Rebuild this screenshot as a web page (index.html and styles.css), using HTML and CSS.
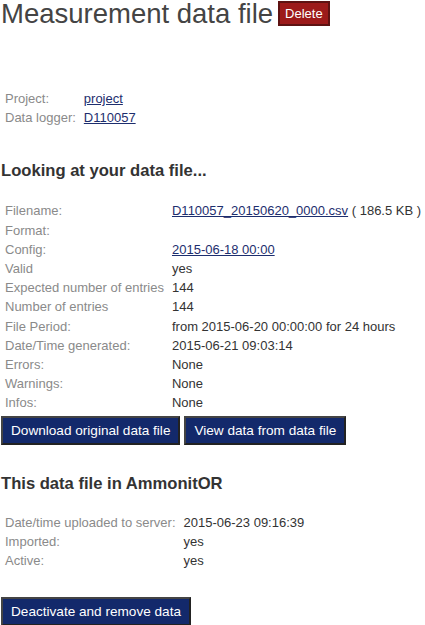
FILE: index.html
```html
<!DOCTYPE html>
<html>
<head>
<meta charset="utf-8">
<link rel="stylesheet" href="styles.css">
</head>
<body>
<h1 class="title">Measurement data file <button class="btn btn-danger">Delete</button></h1>

<table class="info info-top">
  <tr><td class="label">Project:</td><td class="value"><a href="#">project</a></td></tr>
  <tr><td class="label">Data logger:</td><td class="value"><a href="#">D110057</a></td></tr>
</table>

<h2 class="section">Looking at your data file...</h2>

<table class="info">
  <tr><td class="label">Filename:</td><td class="value"><a href="#">D110057_20150620_0000.csv</a> ( 186.5 KB )</td></tr>
  <tr><td class="label">Format:</td><td class="value"></td></tr>
  <tr><td class="label">Config:</td><td class="value"><a href="#">2015-06-18 00:00</a></td></tr>
  <tr><td class="label">Valid</td><td class="value">yes</td></tr>
  <tr><td class="label">Expected number of entries</td><td class="value">144</td></tr>
  <tr><td class="label">Number of entries</td><td class="value">144</td></tr>
  <tr><td class="label">File Period:</td><td class="value">from 2015-06-20 00:00:00 for 24 hours</td></tr>
  <tr><td class="label">Date/Time generated:</td><td class="value">2015-06-21 09:03:14</td></tr>
  <tr><td class="label">Errors:</td><td class="value">None</td></tr>
  <tr><td class="label">Warnings:</td><td class="value">None</td></tr>
  <tr><td class="label">Infos:</td><td class="value">None</td></tr>
</table>

<div class="actions">
  <button class="btn btn-primary">Download original data file</button>
  <button class="btn btn-primary">View data from data file</button>
</div>

<h2 class="section section-2">This data file in AmmonitOR</h2>

<table class="info info-bottom">
  <tr><td class="label">Date/time uploaded to server:</td><td class="value">2015-06-23 09:16:39</td></tr>
  <tr><td class="label">Imported:</td><td class="value">yes</td></tr>
  <tr><td class="label">Active:</td><td class="value">yes</td></tr>
</table>

<div class="actions actions-bottom">
  <button class="btn btn-primary">Deactivate and remove data</button>
</div>
</body>
</html>
```

FILE: styles.css
```css
html, body {
  margin: 0;
  padding: 0;
  background: #fff;
}
body {
  padding: 0 1px;
  font-family: "Liberation Sans", Arial, sans-serif;
  font-size: 13px;
  color: #333;
}
.title {
  margin: 0;
  font-size: 27.5px;
  font-weight: normal;
  line-height: 27px;
  color: #444;
  display: flex;
  align-items: flex-end;
  gap: 5px;
}
.btn {
  font-family: "Liberation Sans", Arial, sans-serif;
  color: #fff;
  cursor: pointer;
}
.btn-danger {
  background: #9c1a1a;
  border: 2px solid #5e1212;
  font-size: 13px;
  padding: 3px 5px;
  line-height: 15px;
  margin-bottom: 1px;
}
.info {
  border-collapse: collapse;
}
.info td {
  padding: 2px 4px;
  line-height: 15.2px;
  vertical-align: top;
  white-space: nowrap;
}
.info-top {
  margin-top: 62px;
}
.label {
  color: #8a8a8a;
}
.value {
  color: #333;
}
.value a {
  color: #1d2e6e;
}
.section {
  margin: 34px 0 20px 0;
  font-size: 16.6px;
  font-weight: bold;
  color: #333;
}
.section-2 {
  margin: 29px 0 19px 0;
}
.actions {
  display: flex;
  gap: 4px;
  margin-top: 3px;
}
.btn-primary {
  background: #13296b;
  border: 2px solid #2a2a2a;
  border-color: #444 #222 #222 #444;
  font-size: 13.6px;
  line-height: 17px;
  padding: 4px 8px;
}
.actions-bottom {
  margin-top: 27px;
}
```
